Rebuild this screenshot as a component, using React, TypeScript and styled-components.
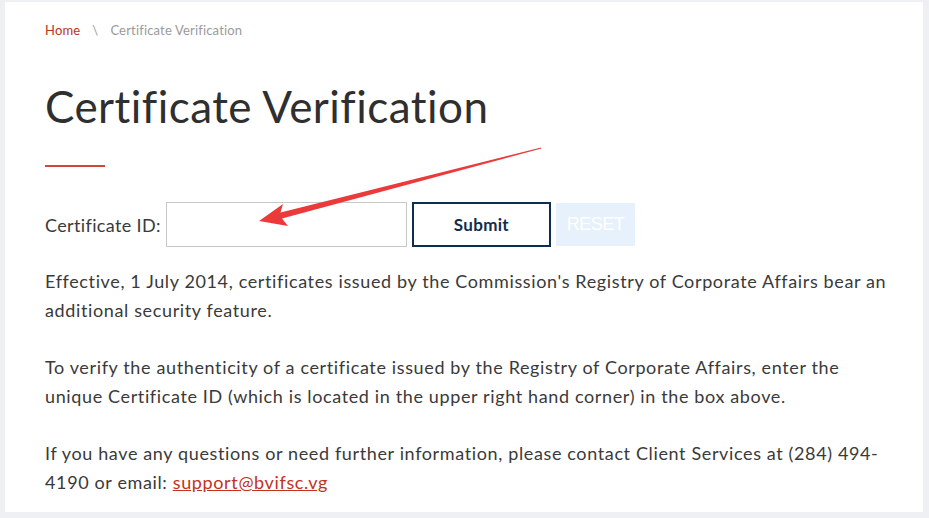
import styled, { createGlobalStyle } from 'styled-components';

const GlobalStyle = createGlobalStyle`
  html, body {
    margin: 0;
    padding: 0;
    background: #eef0f4;
  }
  body {
    font-family: Lato, "Liberation Sans", sans-serif;
    font-variant-ligatures: none;
    color: #3a3a3a;
  }
`;

const Page = styled.div`
  position: relative;
  width: 929px;
  height: 518px;
  padding: 2px 6px 6px 5px;
  box-sizing: border-box;
`;

const Card = styled.main`
  background: #fff;
  height: 100%;
  box-sizing: border-box;
  padding: 19px 20px 0 40px;
  overflow: hidden;
`;

const Breadcrumb = styled.nav`
  display: flex;
  align-items: center;
  gap: 12px;
  font-size: 13px;
  line-height: 18px;
  letter-spacing: 0.17px;
  color: #9a9a9a;
`;

const Crumb = styled.a<{ $active?: boolean }>`
  color: ${(p) => (p.$active ? '#b8331f' : '#9a9a9a')};
  text-decoration: none;
`;

const Title = styled.h1`
  margin: 41px 0 0;
  font-size: 44px;
  line-height: 52px;
  font-weight: 400;
  letter-spacing: 0.46px;
  color: #2f2f2f;
`;

const Rule = styled.hr`
  width: 60px;
  height: 2px;
  margin: 33px 0 0;
  border: 0;
  background: #d0463a;
`;

const Form = styled.form`
  display: flex;
  align-items: center;
  margin-top: 35px;
  height: 45px;
`;

const Label = styled.label`
  font-size: 18px;
  letter-spacing: 0.36px;
  margin-right: 5px;
`;

const Input = styled.input`
  width: 241px;
  height: 45px;
  box-sizing: border-box;
  border: 1px solid #c8c8c8;
  margin-right: 5px;
  font-size: 16px;
  padding: 0 10px;
`;

const SubmitButton = styled.button`
  width: 139px;
  height: 45px;
  box-sizing: border-box;
  border: 2px solid #0f2d4e;
  background: #fff;
  color: #0f2d4e;
  font-family: Lato, "Liberation Sans", sans-serif;
  font-size: 17px;
  font-weight: 700;
  letter-spacing: 0.3px;
  margin-right: 5px;
`;

const ResetButton = styled.button`
  width: 79px;
  height: 43px;
  border: 0;
  background: #e6f1fc;
  color: #fff;
  font-family: "Liberation Sans", sans-serif;
  font-size: 18px;
  letter-spacing: -0.5px;
`;

const Text = styled.p`
  margin: 20px 0 0;
  width: 845px;
  font-size: 18px;
  line-height: 28.7px;
  letter-spacing: 0.63px;
  & + & {
    margin-top: 28.7px;
  }
`;

const Mail = styled.a`
  color: #c2331f;
  text-decoration: underline;
`;

const Arrow = styled.svg`
  position: absolute;
  left: 0;
  top: 0;
  pointer-events: none;
`;

export default function App() {
  return (
    <Page>
      <GlobalStyle />
      <Card>
        <Breadcrumb>
          <Crumb $active href="#">Home</Crumb>
          <span>\</span>
          <Crumb>Certificate Verification</Crumb>
        </Breadcrumb>
        <Title>Certificate Verification</Title>
        <Rule />
        <Form onSubmit={(e) => e.preventDefault()}>
          <Label htmlFor="cert">Certificate ID:</Label>
          <Input id="cert" type="text" />
          <SubmitButton type="submit">Submit</SubmitButton>
          <ResetButton type="reset">RESET</ResetButton>
        </Form>
        <Text>
          Effective, 1 July 2014, certificates issued by the Commission's Registry of Corporate Affairs bear an
          additional security feature.
        </Text>
        <Text>
          To verify the authenticity of a certificate issued by the Registry of Corporate Affairs, enter the
          unique Certificate ID (which is located in the upper right hand corner) in the box above.
        </Text>
        <Text>
          If you have any questions or need further information, please contact Client Services at (284) 494-
          <br />
          4190 or email: <Mail href="#">support@bvifsc.vg</Mail>
        </Text>
      </Card>
      <Arrow width="929" height="518" viewBox="0 0 929 518">
        <polygon
          fill="#ec3a3a"
          points="541,147.6 541.4,148.6 282,218.6 288,226 259,221 283,204 280.5,212.4"
        />
      </Arrow>
    </Page>
  );
}
